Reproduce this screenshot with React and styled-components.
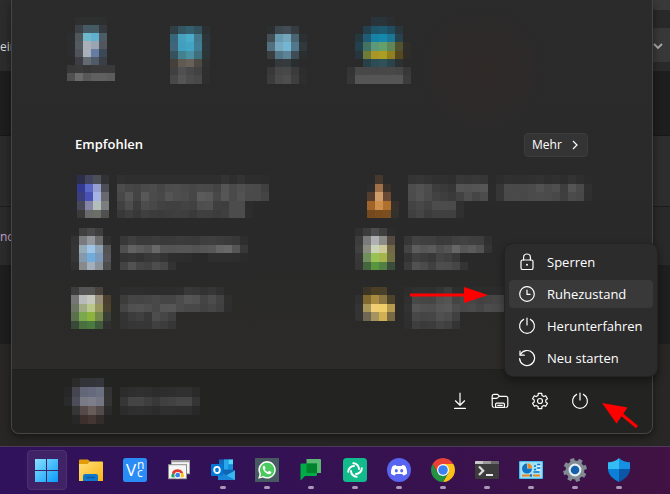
import React from "react";
import styled, { createGlobalStyle } from "styled-components";

const GlobalStyle = createGlobalStyle`
  * { box-sizing: border-box; }
  html, body { margin: 0; padding: 0; background: #272624; }
  body { font-family: "Open Sans", "Noto Sans", sans-serif; color: #fff; }
  button { font: inherit; color: inherit; border: 0; background: none; padding: 0; margin: 0; }
  svg { display: block; flex: none; }
`;

/* ---------- page frame ---------- */

const Desktop = styled.div`
  min-height: 100vh;
  display: flex;
  flex-direction: column;
  overflow: hidden;
`;

const Stage = styled.main`
  flex: 1;
  display: grid;
  grid-template-columns: 11px minmax(0, 1fr) 17px;
  background: #282725;
`;

const Strip = styled.div`
  display: flex;
  flex-direction: column;
  overflow: hidden;
`;

const Band = styled.div`
  height: ${(p) => p.$h}px;
  flex: none;
  display: flex;
  align-items: center;
  padding-top: ${(p) => p.$pad || 0}px;
  background: ${(p) => p.$bg};
  border-top: 1px solid ${(p) => p.$line || p.$bg};
  color: ${(p) => p.$ink || "#d8d8d8"};
  font-size: 12px;
  line-height: 20px;
`;

const StartMenu = styled.section`
  position: relative;
  margin-bottom: 12px;
  display: flex;
  flex-direction: column;
  border: solid #454545;
  border-width: 0 1px 1px;
  border-radius: 0 0 8px 8px;
  background: #2a2a2a;
  box-shadow: 0 3px 8px rgba(0, 0, 0, 0.45);
`;

const MenuBody = styled.div`
  flex: 1;
  padding: 17px 64px 29px 55px;
  background: radial-gradient(circle at 470px 70px, #2f2927 0, #2b2a2a 60px, transparent 90px),
    linear-gradient(#2b2b2b, #292929 70%, #2c2b29);
`;

const PinnedGrid = styled.div`
  margin-left: -24px;
  display: grid;
  grid-template-columns: repeat(auto-fill, 96px);
  justify-items: center;
`;

const SectionHead = styled.header`
  margin-top: 48px;
  padding-left: 8px;
  display: flex;
  align-items: center;
  justify-content: space-between;
`;

const SectionTitle = styled.h2`
  margin: 0;
  padding-bottom: 2px;
  font-size: 13px;
  line-height: 20px;
  font-weight: 600;
`;

const MoreButton = styled.button`
  width: 64px;
  height: 24px;
  display: flex;
  align-items: center;
  justify-content: space-between;
  && {
    padding: 0 8px 1px 7px;
    border: 1px solid #3c3c3c;
    background: #343434;
  }
  border-radius: 4px;
  font-size: 12px;
  line-height: 16px;
`;

const RecommendedGrid = styled.div`
  margin-top: 15px;
  display: grid;
  grid-template-columns: 285px minmax(0, 1fr);
  grid-auto-rows: 56px;
`;

const Tile = styled.div`
  min-width: 0;
`;

const MenuFooter = styled.footer`
  height: 64px;
  padding: 0 52px 2px 48px;
  display: flex;
  align-items: center;
  justify-content: space-between;
  border-top: 1px solid #1f1f1d;
  border-radius: 0 0 8px 8px;
  background: #232321;
`;

const FooterActions = styled.div`
  display: flex;
`;

const FooterButton = styled.button`
  width: 40px;
  height: 40px;
  display: grid;
  place-items: center;
`;

/* ---------- power flyout ---------- */

const PowerAnchor = styled.div`
  position: relative;
`;

const Flyout = styled.div`
  position: absolute;
  z-index: 2;
  right: -57px;
  bottom: 45px;
  width: 152px;
  padding: 4px;
  display: flex;
  flex-direction: column;
  gap: 4px;
  border-radius: 8px;
  background: #2c2c2c;
  box-shadow: 0 0 0 1px #232323, 0 4px 10px rgba(0, 0, 0, 0.45);
`;

const FlyoutItem = styled.button`
  height: 28px;
  display: flex;
  align-items: center;
  gap: 11px;
  && { padding: 0 0 0 9px; background: ${(p) => (p.$active ? "#393939" : "transparent")}; }
  border-radius: 4px;
  font-size: 13px;
  line-height: 20px;
  white-space: nowrap;
`;

const ItemPointer = styled.svg`
  position: absolute;
  right: calc(100% + 17px);
  top: 43px;
`;

const ButtonPointer = styled.svg`
  position: absolute;
  left: 42px;
  top: 20px;
`;

/* ---------- taskbar ---------- */

const Taskbar = styled.nav`
  height: 48px;
  flex: none;
  display: flex;
  align-items: center;
  gap: 4px;
  padding: 0 0 2px 27px;
  border-top: 1px solid #4d3b5c;
  background: linear-gradient(90deg, #30125c, #321156 35%, #38124e 65%, #411243);
`;

const TaskButton = styled.button`
  position: relative;
  width: 40px;
  height: 40px;
  display: grid;
  place-items: center;
  border-radius: 4px;
  && {
    border: 1px solid ${(p) => (p.$active ? "#4c3070" : "transparent")};
    background: ${(p) => (p.$active ? "#402367" : "transparent")};
  }
`;

const RunningMark = styled.span`
  position: absolute;
  left: 16px;
  bottom: 0;
  width: 6px;
  height: 3px;
  border-radius: 2px;
  background: #ab98b8;
`;

/* ---------- pixelated previews ---------- */

const fill = (c) => (c.length === 2 ? `#${c}${c}${c}` : `#${c}`);

/* Each row reads "height: cell cell ..."; a cell is a two-digit grey, a six-digit colour or a dot. */
function Blocks({ x, y, rows }) {
  let top = y;
  const out = [];
  rows.forEach((row, r) => {
    const [h, cells] = row.split(":");
    cells.trim().split(" ").forEach((c, i) => {
      if (c !== ".") {
        out.push(<rect key={`${r}-${i}`} x={x + i * 8} y={top} width={8} height={+h} fill={fill(c)} />);
      }
    });
    top += +h;
  });
  return <g>{out}</g>;
}

function Mosaic({ width, height, parts }) {
  return (
    <svg width={width} height={height} viewBox={`0 0 ${width} ${height}`} shapeRendering="crispEdges" aria-hidden="true">
      {parts.map((p, i) => <Blocks key={i} {...p} />)}
    </svg>
  );
}

const PINNED = [
  { width: 48, x: 0, y: 0, rows: [
    "8: . 2e302f 2e302f 2d3030 2d2f2f .",
    "8: . 3a4045 455b64 455b64 34393e .",
    "8: 2b2d2e 50565a 6cb8cc 60b0d0 4c5c64 .",
    "8: 2b2d2e 535a60 a9afb9 9aa4b2 52565f .",
    "8: 2b2d2e 50535a a9b0bb 647da0 3d4856 .",
    "8: . 3c3e44 646a72 505b69 3a3f45 .",
    "8: 38 3a 37 3a 3a 3a",
    "8: 50 6a 58 60 60 5c"] },
  { width: 48, x: 7, y: 9, rows: [
    "8: 2f3f44 345663 345f6e 34525d 2b3033",
    "8: 386578 47a0be 4aaccb 43788b 2d353a",
    "9: 40657a 42a0bf 43a5c4 417e94 2d363a",
    "8: 36525c 44818f 4a90a3 3d6f7d 2c3538",
    "8: 45403a 605a52 676058 4d4a43 30",
    "8: 40 50 48 42 2e",
    "9: 48 55 4c 48 2e"] },
  { width: 48, x: 8, y: 9, rows: [
    "8: 2c2f30 3c474e 414c54 343c40 .",
    "8: 444e55 669aaf 74a5b9 486571 2c3033",
    "9: 53707f 75a8bf 73b6d2 50778a 30383c",
    "8: 3a3e40 527585 5d8496 3e4d55 2b2e2f",
    "8: . 33393c 343b3f 2b2e2f .",
    "8: 38 46 48 3b 2d",
    "9: 3b 4a 4e 3f 2e"] },
  { width: 64, x: 0, y: 0, rows: [
    "9: . . . 28333a 28333a 2a2e30 . .",
    "8: . . 24404d 1f5568 1c5a70 204e60 28363d .",
    "8: . 25373f 205c74 1483a5 1489ad 1b7795 26424e .",
    "9: . 22414d 437263 5a9a7b 649f6c 5f8757 52522f 302e2a",
    "8: . 26363c 6f7c38 a99626 ab9c22 90801f 57491f 302c28",
    "8: . . 284047 2b4e56 2f5157 2b444c 2b3032 .",
    "8: 34 48 48 47 48 48 46 38",
    "9: 36 55 55 55 55 55 55 3c"] },
];

const RECOMMENDED = [
  [
    { x: 10, y: 3, rows: [
      "9: 2d2f4a 42435c 4c4f58 323236",
      "8: 343a90 5a67c4 949fce 4d4d56",
      "9: 3a3e7e 4852b4 a5b3e2 68696e",
      "9: 474858 8584a5 b2beba 7b7e7d",
      "8: 3a 6a6a6c 6a7066 50"] },
    { x: 50, y: 3, rows: [
      "9: 30 2e 2e 2e 2e 2e 2e 2e 2e 2e 2e 2e 2e 33 2e 33 2d 2d 2c",
      "8: 4c 46 44 4a 4c 46 4d 4e 4a 47 4a 49 44 55 4a 50 4b 4a 40",
      "9: 48 56 44 58 4b 48 54 4e 4c 46 5b 58 48 56 4a 52 4a 4a 44",
      "9: 40 4d 3c 4c 48 42 40 40 43 41 4e 50 3f 3e 4c 4c 2c",
      "8: 38 3e 38 3f 3c 3b 3d 3f 3e 3a 40 3f 3c 3f 4c 4c 2d"] },
  ],
  [
    { x: 15, y: 3, rows: [
      "9: . 46382c . .",
      "8: 2d a07048 3a302a .",
      "9: 543d2d d09c6a 684a34 .",
      "9: a0642a cf8f4c b0702d 38312b",
      "8: 74491d 7a4e1c 7a4e1e 34302b"] },
    { x: 56, y: 3, rows: [
      "9: 34 36 33 30 30 2e 38 36 38 36 . 2d 30 2f 2f 30 32 2e 30 2d 33 2e 2b",
      "8: 4d 52 4c 3d 3a 36 54 52 54 56 2b 36 4a 49 49 4b 52 4b 4f 3e 55 4a 30",
      "9: 4c 53 4b 42 3e 3a 42 4e 45 4c 2b 36 49 4a 48 4b 4c 4b 48 3f 4b 48 2f",
      "9: 43 48 42 4c 4c 4b 30",
      "8: 3f 45 3c 40 40 40 30"] },
  ],
  [
    { x: 4, y: 0, rows: [
      "8: . 40 48494a 3e3e3f .",
      "9: 33 7a7b7f 94979e 6a6c6e 30",
      "8: 35 94abb8 9fc5e6 8fa3b8 53",
      "9: 35 8499ab 6facdc 7d9abb 56565a",
      "8: 30 88898b a3b0bb 8b9198 4c"] },
    { x: 53, y: 8, rows: [
      "9: 38 3f 3a 3a 3c 3a 3a 3c 3b 3a 3e 3f 3d 3b 38 2e",
      "8: 4f 62 5b 56 68 55 54 56 56 53 56 58 65 68 56 38",
      "9: 33 36 33 38 3a 34 2e 2d 2c . . 2e 2e 2e 2d 2b",
      "8: 43 52 45 42 4d 46 33"] },
  ],
  [
    { x: 3, y: 0, rows: [
      "8: 30 3c 4b4d4e 3f 2c",
      "9: 3c 7a7a7a aeb0b2 8b8c88 544a42",
      "8: 40 8a8c80 c8d3b8 cdc998 726847",
      "9: 38 718f5c 98c253 a5b54c 716f44",
      "8: 36 45663f 57963c 527f42 3a4d3a"] },
    { x: 52, y: 8, rows: [
      "9: 36 42 40 3f 3a 3b 40 42 3f 3e 30",
      "8: 44 5d 56 5b 4e 54 66 56 5b 52 34",
      "9: 33 40 3c 38 44 40 38",
      "8: 3b 51 4b 40 4d 4c 46 34"] },
  ],
  [
    { x: 4, y: 3, rows: [
      "8: 3c 54 54 48413d .",
      "9: 757575 b8bbb9 c5c8bc 958e78 4a3f2d",
      "8: 6c7561 a0aa85 b9c78b 98965f 4a4330",
      "9: 5b704c 7aa84e 8cb43d 75884b 3a3f35",
      "8: 3a4a38 4a703d 4b7a40 405a3c 30"] },
    { x: 53, y: 3, rows: [
      "8: 2d 2e 2e 2d 2c 2d 2d 2e 38 36 32 36 30 .",
      "9: 3c 45 44 46 49 45 45 4c 55 52 44 4c 42 2f",
      "8: 45 50 52 4e 48 55 56 4c 48 48 42 46 40 2e",
      "9: 34 3c 40 38 4d 46 3f",
      "8: 33 36 37 36 40 3c 36"] },
  ],
  [
    { x: 3, y: 3, rows: [
      "8: . 3c3424 4a3f24 4a3f28 .",
      "9: 30 80692f a88c3f 8a7540 4d432b",
      "8: 34 a99759 f0cf74 f1cf68 b89a4f",
      "9: 33 6f6653 a5945f d0b052 7a6a43"] },
    { x: 52, y: 3, rows: [
      "8: 2d 30 30 2f 34 3c 2d 2c 2c 2c 2c 2c 2c",
      "9: 30 48 46 45 50 54 44 48 46 42 44 46 45",
      "8: 32 54 50 4f 56 58 4c 48 4a 45 4c 4a 48",
      "9: 30 48 45 46 50 4c 40",
      "8: 2e 3e 3a 3c 44 40 34"] },
  ],
];

const ACCOUNT = [
  { x: 4, y: 0, rows: [
    "9: . 2b 333438 33343a 35363b .",
    "10: 27 45454f 636677 666a7e 6a7080 33",
    "9: 2a 4c4d58 787a86 7d7e8a 757683 34",
    "9: . 35 56494a 675c5a 534b4a 2b",
    "9: . 27 3d302c 443632 332c2b ."] },
  { x: 60, y: 9, rows: [
    "10: 2c 2e 30 2f 2c 2d 2e 30 30 2a",
    "9: 36 44 45 3e 38 40 42 46 46 34",
    "9: 2c 2f 30 2e 2c 30 30 2e 2e 28"] },
];

/* ---------- line icons ---------- */

const LineIcon = ({ size = 18, children }) => (
  <svg width={size} height={size} viewBox="0 0 18 18" fill="none" stroke="#fff" strokeWidth="1.2" strokeLinecap="round" strokeLinejoin="round" aria-hidden="true">
    {children}
  </svg>
);

const LockIcon = () => (
  <LineIcon>
    <rect x="3" y="7" width="12" height="9.5" rx="1.6" />
    <path d="M5.6 7V4.4a3.4 3.4 0 0 1 6.800 0V7" />
    <circle cx="9" cy="11.700" r="1" fill="#fff" stroke="none" />
  </LineIcon>
);
const ClockIcon = () => (
  <LineIcon>
    <circle cx="9" cy="9" r="7.300" />
    <path d="M9 5v4.400h3" />
  </LineIcon>
);
const PowerIcon = () => (
  <LineIcon>
    <path d="M9 1v7" />
    <path d="M5.600 2.400a7.400 7.400 0 1 0 6.800 0" />
  </LineIcon>
);
const RestartIcon = () => (
  <LineIcon>
    <path d="M2 2v4.200h4.300" />
    <path d="M2.300 5.800A7.500 7.500 0 1 1 1.600 9.600" />
  </LineIcon>
);
const DownloadIcon = () => (
  <LineIcon>
    <path d="M9 1.200v12M4.400 8.800 9 13.300l4.600-4.500M3.600 16.400h10.800" />
  </LineIcon>
);
const FolderIcon = () => (
  <LineIcon>
    <path d="M3 15.400a1.800 1.800 0 0 1-1.800-1.800V4.200a1.800 1.800 0 0 1 1.800-1.800h3.600l2 2H15a1.800 1.800 0 0 1 1.800 1.800v7.400a1.800 1.800 0 0 1-1.800 1.800" />
    <path d="M1.200 6.400h4.600l2.400-2" />
    <path d="M4.600 15.400v-3.200a1 1 0 0 1 1-1h6.800a1 1 0 0 1 1 1v3.200zM6.800 13.400h4.400" />
  </LineIcon>
);
const GEAR = Array.from({ length: 6 }, (_, i) => {
  const at = (deg, r) => {
    const a = ((deg + i * 60) * Math.PI) / 180;
    return `${(9 + r * Math.sin(a)).toFixed(2)} ${(9 - r * Math.cos(a)).toFixed(2)}`;
  };
  return `${i ? "L" : "M"}${at(-13, 7.8)}L${at(13, 7.8)}L${at(19, 5.9)}L${at(41, 5.9)}`;
}).join("") + "Z";
const GearIcon = () => (
  <LineIcon>
    <path d={GEAR} />
    <circle cx="9" cy="9" r="2.5" />
  </LineIcon>
);

/* ---------- taskbar icons ---------- */

const App24 = ({ children }) => (
  <svg width="24" height="24" viewBox="0 0 24 24" aria-hidden="true">{children}</svg>
);

const WindowsLogo = () => (
  <App24>
    <defs>
      <linearGradient id="win" x1="0" y1="0" x2="23" y2="23" gradientUnits="userSpaceOnUse">
        <stop offset="0" stopColor="#8ce2ff" /><stop offset="1" stopColor="#0a9cf8" />
      </linearGradient>
    </defs>
    <path fill="url(#win)" d="M0 1h11v11H0zM12 1h11v11H12zM0 13h11v11H0zM12 13h11v11H12z" />
  </App24>
);
const ExplorerLogo = () => (
  <App24>
    <defs>
      <linearGradient id="fold" x1="0" y1="0" x2="1" y2="1">
        <stop offset="0" stopColor="#ffe07a" /><stop offset="1" stopColor="#fbb414" />
      </linearGradient>
    </defs>
    <path fill="#e39b06" d="M0 2.500a1 1 0 0 1 1-1h8l2 2v3H0z" />
    <path fill="url(#fold)" d="M0 6h8.500l2.500-2.500H23a1 1 0 0 1 1 1V23H0z" />
    <path fill="#1078cc" d="M4 23v-5a2 2 0 0 1 2-2h11a2 2 0 0 1 2 2v5z" />
    <path stroke="#0a5aa5" strokeWidth="1.400" d="M7 19.500h9" />
  </App24>
);
const VncLogo = () => (
  <App24>
    <rect width="24" height="24" rx="2.500" fill="#2a8df5" />
    <g fill="#fff" fontFamily="Open Sans, sans-serif">
      <text x="3" y="18" fontSize="17">V</text>
      <text x="14" y="11" fontSize="12">n</text>
      <text x="14" y="19" fontSize="12">c</text>
    </g>
  </App24>
);
const ChromeDisc = ({ cx, cy, r }) => {
  const p = (deg, k = r) => `${(cx + k * Math.cos((deg * Math.PI) / 180)).toFixed(2)} ${(cy + k * Math.sin((deg * Math.PI) / 180)).toFixed(2)}`;
  const h = r / 2;
  return (
    <g>
      <path fill="#ea4335" d={`M${p(210)}A${r} ${r} 0 0 1 ${p(330)}L${p(270, h)}L${p(150, h)}Z`} />
      <path fill="#fbc116" d={`M${p(330)}A${r} ${r} 0 0 1 ${p(90)}L${p(30, h)}L${p(270, h)}Z`} />
      <path fill="#229342" d={`M${p(90)}A${r} ${r} 0 0 1 ${p(210)}L${p(150, h)}L${p(30, h)}Z`} />
      <circle cx={cx} cy={cy} r={h} fill="#fff" />
      <circle cx={cx} cy={cy} r={r * 0.4} fill="#3b82f0" />
    </g>
  );
};
const RemoteLogo = () => (
  <App24>
    <rect x="4.500" y="2.700" width="18" height="13" fill="#f4f4f4" stroke="#aaa" />
    <path d="M4 3.700h19" stroke="#8a8a8a" />
    <rect x="1.500" y="6.700" width="18" height="14" fill="#f6f6f6" stroke="#8d8d8d" />
    <path d="M4.500 19.500a6 6 0 0 1 1-5l4.500 5z" fill="#23a455" />
    <path d="M5 14.500a6.300 6.300 0 0 1 11 0v2H7z" fill="#e4392f" />
    <path d="M12 15h4.300a6 6 0 0 1 .3 4.500H12z" fill="#fbc116" />
    <circle cx="10.700" cy="17.200" r="3.200" fill="#fff" />
    <circle cx="10.700" cy="17.200" r="2.400" fill="#3b82f0" />
    <path d="M2 19.600h17v.7H2z" fill="#eee" />
  </App24>
);
const OutlookLogo = () => (
  <App24>
    <path fill="#0f6cbd" d="M8 1.500h14v12H8z" />
    <path fill="#28a8ea" d="M13 1.500h4.500v5H13zM13 6.500h4.500v5H13z" />
    <path fill="#50d9ff" d="M17.500 1.500H22v5h-4.500z" />
    <path fill="#1490df" d="M17.500 6.500H22v5h-4.500z" />
    <path fill="#1066b5" d="M7 12h17v10H7z" />
    <path fill="#35b8f1" d="M24 12.500V22H7z" />
    <path fill="#1a86d9" d="M7 12.500 24 22H8a1 1 0 0 1-1-1z" />
    <rect x="0" y="6" width="12" height="12" rx="1" fill="#0078d4" />
    <ellipse cx="6" cy="12" rx="2.800" ry="3.200" fill="none" stroke="#fff" strokeWidth="1.800" />
  </App24>
);
const WhatsAppLogo = () => (
  <App24>
    <rect width="24" height="24" fill="#475a62" />
    <path fill="#fff" d="m3.200 20.800 1.300-4.700a8.700 8.700 0 1 1 3.300 3.300z" />
    <path fill="#4bc95e" d="m5.200 18.900.9-3.100a7.200 7.200 0 1 1 2.200 2.200z" />
    <path fill="#fff" d="M9.200 7.600c-.5 0-1.500.8-1.400 2.300.2 2.700 3.500 6.100 6.300 6.300 1.300 0 2.400-1 2.300-2.200l-2.300-1.200-1.300 1.200c-1.200-.4-2.500-1.600-3-2.800l.9-1.200z" />
  </App24>
);
const ChatLogo = () => (
  <App24>
    <path fill="#5bb974" d="M7.500 1H21a1 1 0 0 1 1 1v13H7.500z" />
    <path fill="#00ac47" d="M2.500 5.500H18V17a1 1 0 0 1-1 1H6l-4.500 4.500v-16a1 1 0 0 1 1-1z" />
    <path fill="#00832d" d="M7.500 5.500H18V15H7.500z" />
  </App24>
);
const ElementLogo = () => (
  <App24>
    <rect width="24" height="24" rx="3.500" fill="#12bb8b" />
    <g fill="none" stroke="#fff" strokeWidth="2" strokeLinecap="round">
      {[0, 90, 180, 270].map((a) => (
        <path key={a} transform={`rotate(${a} 12 12)`} d="M10.300 5.200a5.800 5.800 0 0 1 5.700 5.800" />
      ))}
    </g>
  </App24>
);
const DiscordLogo = () => (
  <App24>
    <circle cx="12" cy="12" r="12" fill="#5865f2" />
    <path fill="#fff" d="M8.800 6.900c-1.300.2-2.200.6-2.900.9-1.500 2.300-2.100 4.900-1.900 8 1.300 1 2.600 1.500 3.800 1.800l1-1.500h6.400l1 1.500c1.300-.3 2.600-.9 3.800-1.800.2-3.200-.5-5.800-1.900-8-.9-.4-1.900-.7-2.900-.9l-.6 1h-5.200z" />
    <ellipse cx="9.300" cy="12.700" rx="1.500" ry="1.700" fill="#5865f2" />
    <ellipse cx="14.700" cy="12.700" rx="1.500" ry="1.700" fill="#5865f2" />
  </App24>
);
const ChromeLogo = () => (
  <App24><ChromeDisc cx={12} cy={12} r={12} /></App24>
);
const TerminalLogo = () => (
  <App24>
    <rect y="3" width="24" height="18" rx="1" fill="#3c3c3c" />
    <path fill="#c8c8c8" d="M1 3h7v3H0V4a1 1 0 0 1 1-1z" />
    <path fill="#9b9b9b" d="M8 3h8v3H8z" />
    <path fill="#6c6c6c" d="M16 3h7a1 1 0 0 1 1 1v2h-8z" />
    <path d="m4 8.500 4.200 4.200L4 17" fill="none" stroke="#ddd" strokeWidth="2.200" />
    <path d="M11 17h7" stroke="#fff" strokeWidth="1.800" />
  </App24>
);
const ControlPanelLogo = () => (
  <App24>
    <rect y="3" width="24" height="18" rx="1" fill="#49bdec" />
    <rect x="1.200" y="4.200" width="21.600" height="15.600" fill="#a4e2fa" />
    <path fill="#1173c4" d="M8 5.600a5 5 0 1 0 5 5H8z" />
    <path fill="#f08a1d" d="M8.500 5.200a5 5 0 0 1 4.600 5H8.500z" />
    <path stroke="#1173c4" strokeWidth="1.500" d="M15 8h2M18.200 6.500h3M15 11.500h2M18.200 10h3M14.500 14h6" />
    <path stroke="#fff" strokeWidth="1" d="M18.200 8.300h3M18.200 12h3" />
    <path stroke="#e88722" strokeWidth="2" d="M3 17.500h8M14 17.500h7" />
    <path stroke="#1173c4" strokeWidth="2.400" d="M11 17.500h2" />
  </App24>
);
const BIG_GEAR = Array.from({ length: 8 }, (_, i) => {
  const at = (deg, r) => {
    const a = ((deg + i * 45) * Math.PI) / 180;
    return `${(12 + r * Math.sin(a)).toFixed(2)} ${(12 - r * Math.cos(a)).toFixed(2)}`;
  };
  return `${i ? "L" : "M"}${at(-14, 9.4)}L${at(-10, 12)}L${at(10, 12)}L${at(14, 9.4)}`;
}).join("") + "Z";
const SettingsLogo = () => (
  <App24>
    <path fill="#818b94" d={BIG_GEAR} transform="rotate(30 12 12)" />
    <circle cx="12" cy="12" r="6.400" fill="#e9edf0" />
    <circle cx="12" cy="12" r="4.300" fill="#1560ac" />
  </App24>
);
const DefenderLogo = () => (
  <App24>
    <path fill="#34bdf4" d="M12 0v11H1V4.300C5 4.300 9 3 12 0z" />
    <path fill="#1690e2" d="M12 0c3 3 7 4.300 11 4.300V11H12z" />
    <path fill="#0b80d8" d="M1 11h11v13C5 20.500 1.200 16.500 1 11z" />
    <path fill="#0a57a8" d="M23 11H12v13c7-3.500 10.800-7.500 11-13z" />
  </App24>
);

const TASKS = [
  { name: "Start", Logo: WindowsLogo, active: true },
  { name: "Explorer", Logo: ExplorerLogo },
  { name: "VNC", Logo: VncLogo },
  { name: "Chrome Remote Desktop", Logo: RemoteLogo },
  { name: "Outlook", Logo: OutlookLogo, running: true },
  { name: "WhatsApp", Logo: WhatsAppLogo, running: true },
  { name: "Google Chat", Logo: ChatLogo, running: true },
  { name: "Element", Logo: ElementLogo, running: true },
  { name: "Discord", Logo: DiscordLogo, running: true },
  { name: "Chrome", Logo: ChromeLogo, running: true },
  { name: "Terminal", Logo: TerminalLogo, running: true },
  { name: "Systemsteuerung", Logo: ControlPanelLogo, running: true },
  { name: "Einstellungen", Logo: SettingsLogo, running: true },
  { name: "Windows-Sicherheit", Logo: DefenderLogo, running: true },
];

const POWER_ITEMS = [
  { label: "Sperren", Icon: LockIcon },
  { label: "Ruhezustand", Icon: ClockIcon, active: true },
  { label: "Herunterfahren", Icon: PowerIcon },
  { label: "Neu starten", Icon: RestartIcon },
];

export default function App() {
  return (
    <Desktop>
      <GlobalStyle />
      <Stage>
        <Strip>
          <Band $h={71} $bg="#2c2c2c" $pad={22}>ein</Band>
          <Band $h={64} $bg="#1e1e1e" />
          <Band $h={71} $bg="#2b2b2b" $line="#181818" />
          <Band $h={59} $bg="#2b2b2b" $line="#1c1c1c" $ink="#c8a2d0" $pad={2}>no</Band>
          <Band $h={79} $bg="#1e1e1e" />
        </Strip>
        <StartMenu aria-label="Startmenü">
          <MenuBody>
            <PinnedGrid>
              {PINNED.map((part, i) => (
                <Tile key={i}><Mosaic width={part.width} height={68} parts={[part]} /></Tile>
              ))}
            </PinnedGrid>
            <SectionHead>
              <SectionTitle>Empfohlen</SectionTitle>
              <MoreButton>
                Mehr
                <svg width="8" height="10" viewBox="0 0 8 10" fill="none" stroke="#fff" strokeWidth="1.2" aria-hidden="true"><path d="m2 1 4 4-4 4" /></svg>
              </MoreButton>
            </SectionHead>
            <RecommendedGrid>
              {RECOMMENDED.map((parts, i) => (
                <Tile key={i}><Mosaic width={248} height={46} parts={parts} /></Tile>
              ))}
            </RecommendedGrid>
          </MenuBody>
          <MenuFooter>
            <Mosaic width={150} height={46} parts={ACCOUNT} />
            <FooterActions>
              <FooterButton aria-label="Downloads"><DownloadIcon /></FooterButton>
              <FooterButton aria-label="Explorer"><FolderIcon /></FooterButton>
              <FooterButton aria-label="Einstellungen"><GearIcon /></FooterButton>
              <PowerAnchor>
                <FooterButton aria-label="Ein/Aus"><PowerIcon /></FooterButton>
                <Flyout>
                  {POWER_ITEMS.map(({ label, Icon, active }) => (
                    <FlyoutItem key={label} $active={active}><Icon />{label}</FlyoutItem>
                  ))}
                  <ItemPointer width="78" height="16" viewBox="0 0 78 16" aria-hidden="true">
                    <path d="M0 8h56" stroke="#f00" strokeWidth="3" />
                    <path d="M54 0v16l24-8z" fill="#f00" />
                  </ItemPointer>
                </Flyout>
                <ButtonPointer width="38" height="28" viewBox="0 0 38 28" aria-hidden="true">
                  <path d="M18 12l17 14" stroke="#f00" strokeWidth="3" />
                  <path d="M0 2l25.500 4.500-11 16z" fill="#f00" />
                </ButtonPointer>
              </PowerAnchor>
            </FooterActions>
          </MenuFooter>
        </StartMenu>
        <Strip>
          <Band $h={10} $bg="#393939" />
          <Band $h={18} $bg="#292929" />
          <Band $h={34} $bg="#383838">
            <svg width="10" height="8" viewBox="0 0 10 8" fill="none" stroke="#aaa" strokeWidth="1.8" aria-hidden="true"><path d="m1 2 4 4 4-4" /></svg>
          </Band>
          <Band $h={9} $bg="#2a2a2a" />
          <Band $h={64} $bg="#1e1e1e" />
          <Band $h={71} $bg="#2d2d2d" $line="#181818" />
          <Band $h={59} $bg="#292929" $line="#1c1c1c" />
          <Band $h={79} $bg="#1f1f1f" />
        </Strip>
      </Stage>
      <Taskbar aria-label="Taskleiste">
        {TASKS.map(({ name, Logo, active, running }) => (
          <TaskButton key={name} $active={active} aria-label={name}>
            <Logo />
            {running && <RunningMark />}
          </TaskButton>
        ))}
      </Taskbar>
    </Desktop>
  );
}
